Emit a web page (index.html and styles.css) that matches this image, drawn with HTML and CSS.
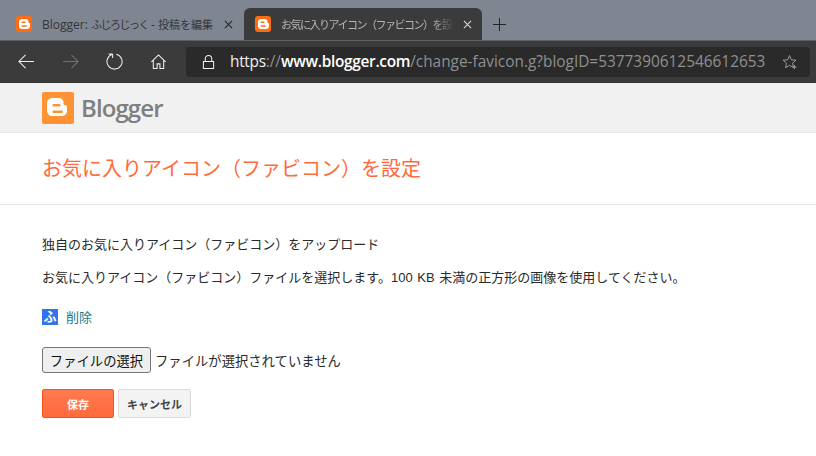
FILE: index.html
```html
<!DOCTYPE html>
<html lang="ja">
<head>
    <meta charset="UTF-8">
    <title>お気に入りアイコン（ファビコン）を設定</title>
    <link rel="stylesheet" href="styles.css">
</head>
<body>
    <!-- Browser chrome -->
    <div class="tabstrip">
        <div class="tab">
            <svg class="favicon" viewBox="0 0 16 16"><use href="#blogger-mark"/></svg>
            <span class="tab-title">Blogger: <span class="tab-ja">ふじろじっく</span> - <span class="tab-ja-wide">投稿を編集</span></span>
            <svg class="tab-close" viewBox="0 0 10 10"><path d="M1 1l8 8M9 1l-8 8"/></svg>
        </div>
        <div class="tab tab-active">
            <svg class="favicon" viewBox="0 0 16 16"><use href="#blogger-mark"/></svg>
            <span class="tab-title tab-fade"><span class="tab-ja">お気に入りアイコン（ファビコン）を設定</span></span>
            <svg class="tab-close" viewBox="0 0 10 10"><path d="M1 1l8 8M9 1l-8 8"/></svg>
        </div>
        <svg class="new-tab" viewBox="0 0 14 14"><path d="M7 0v14M0 7h14"/></svg>
    </div>

    <div class="toolbar">
        <svg class="nav-icon" viewBox="0 0 18 18"><path d="M17 9H1M8 2L1 9l7 7"/></svg>
        <svg class="nav-icon nav-disabled" viewBox="0 0 18 18"><path d="M1 9h16M10 2l7 7-7 7"/></svg>
        <svg class="nav-icon" viewBox="0 0 18 18"><path d="M11 1.300a8 8 0 1 1-4.300.1M7 1v4.300M7 1H2.800"/></svg>
        <svg class="nav-icon" viewBox="0 0 18 18"><path d="M1.500 9.500L9 2l7.500 7.500M3.500 7.500V16.500h4v-5h3v5h4V7.500"/></svg>
        <div class="addressbar">
            <svg class="lock" viewBox="0 0 14 16"><path d="M1.500 7.500h11v7.500h-11zM3.500 7.500V4.500a3.500 3.500 0 0 1 7 0v3"/></svg>
            <span class="url"><span class="url-scheme">https</span>://<span class="url-host">www.blogger.com</span>/change-favicon.g?blogID=5377390612546612653</span>
            <svg class="star" viewBox="0 0 16 16"><path d="M7.500 1.500l1.800 4.300 4.700.4-3.500 3 1 4.500-4-2.400-4 2.400 1-4.500-3.500-3 4.700-.4zM12.500 11v4M10.500 13h4"/></svg>
        </div>
    </div>

    <!-- Page -->
    <header class="brand-bar">
        <svg class="brand-logo" viewBox="0 0 32 32">
            <rect width="32" height="32" rx="2" fill="#ff9334"/>
            <path fill="#fff" d="M11 6h5.500c3 0 5 2 5 4.500V12c0 .8.700 1.200 1.700 1.200 1.300 0 1.800.500 1.800 1.500v4c0 3-2.300 5.300-5.300 5.300h-9.200c-3 0-5.500-2.300-5.500-5.300V11c0-3 2.500-5 6-5z"/>
            <rect x="10.500" y="12" width="8" height="2.400" rx="1.200" fill="#ff9334"/>
            <rect x="10.500" y="18.500" width="10.500" height="2.400" rx="1.200" fill="#ff9334"/>
        </svg>
        <span class="brand-name">Blogger</span>
    </header>

    <h1 class="page-title">お気に入りアイコン（ファビコン）を設定</h1>

    <main class="content">
        <p class="upload-title">独自のお気に入りアイコン（ファビコン）をアップロード</p>
        <p class="upload-hint">お気に入りアイコン（ファビコン）ファイルを選択します。100 KB 未満の正方形の画像を使用してください。</p>

        <div class="current-icon">
            <span class="icon-preview">ふ</span>
            <a class="delete-link" href="#">削除</a>
        </div>

        <div class="file-row">
            <button class="file-button" type="button">ファイルの選択</button>
            <span class="file-status">ファイルが選択されていません</span>
        </div>

        <div class="actions">
            <button class="btn btn-save" type="button">保存</button>
            <button class="btn btn-cancel" type="button">キャンセル</button>
        </div>
    </main>

    <svg class="sprites" width="0" height="0">
        <symbol id="blogger-mark" viewBox="0 0 16 16">
            <rect width="16" height="16" rx="3" fill="#ff6d10"/>
            <path fill="#fff" d="M6 3h3.500C11.500 3 12.500 4.300 12.500 6v.5c0 .6.500.8 1 .8.400 0 .500.300.500.700v2c0 1.900-1.300 3-3 3H6c-1.800 0-3-1.200-3-3V6c0-1.700 1.200-3 3-3z"/>
            <rect x="5.500" y="5.500" width="4" height="1.500" rx=".7" fill="#ff6d10"/>
            <rect x="5.500" y="9.300" width="5.500" height="1.500" rx=".7" fill="#ff6d10"/>
        </symbol>
    </svg>
</body>
</html>
```

FILE: styles.css
```css
/* General Styles */
body {
    margin: 0;
    background: #fff;
    color: #2a2a2a;
    font-family: "Liberation Sans", "Noto Sans CJK JP", sans-serif;
    font-size: 13px;
    overflow: hidden;
}

.sprites {
    position: absolute;
}

/* Tab strip */
.tabstrip {
    display: flex;
    align-items: flex-end;
    height: 40px;
    box-sizing: border-box;
    padding-top: 8px;
    background: #808691;
}

.tab {
    display: flex;
    align-items: center;
    width: 244px;
    height: 32px;
    box-sizing: border-box;
    padding: 0 11px 0 16px;
    color: #33353a;
    font-family: "Open Sans", "Noto Sans CJK JP", sans-serif;
    font-size: 12px;
}

.tab-active {
    width: 238px;
    padding: 0 10px 0 11px;
    border-radius: 6px 6px 0 0;
    background: #3b3b3b;
    color: #b5b5b5;
}

.favicon {
    flex: none;
    width: 16px;
    height: 16px;
    margin-right: 10px;
}

.tab-title {
    flex: 1;
    overflow: hidden;
    white-space: nowrap;
}

/* Narrow kana, the UI font of the original tabs sets them tighter */
.tab-ja {
    font-size: 11px;
    letter-spacing: -1.5px;
}

.tab-ja-wide {
    font-size: 11px;
}

.tab-fade {
    -webkit-mask-image: linear-gradient(to right, #000 88%, transparent);
    mask-image: linear-gradient(to right, #000 88%, transparent);
}

.tab-close {
    flex: none;
    width: 9px;
    height: 9px;
    margin-left: 9px;
    fill: none;
    stroke: #26282c;
    stroke-width: 1.2;
}

.tab-active .tab-close {
    stroke: #d8d8d8;
}

.new-tab {
    width: 13px;
    height: 13px;
    margin: 0 0 9px 11px;
    fill: none;
    stroke: #1c1c1c;
    stroke-width: 1;
}

/* Toolbar */
.toolbar {
    display: flex;
    align-items: center;
    gap: 27px;
    height: 43px;
    box-sizing: border-box;
    padding: 0 6px 0 18px;
    background: #3b3b3b;
    border-top: 1px solid #5d5f63;
    border-bottom: 1px solid #333;
}

.nav-icon {
    flex: none;
    width: 17px;
    height: 17px;
    fill: none;
    stroke: #f0f0f0;
    stroke-width: 1.1;
}

.nav-disabled {
    stroke: #717171;
}

.addressbar {
    display: flex;
    align-items: center;
    flex: 1;
    height: 30px;
    margin-left: -8px;
    padding: 0 12px 0 16px;
    border-radius: 4px;
    background: #2a2a2a;
    color: #8f8f8f;
    font-family: "Open Sans", sans-serif;
    font-size: 15.4px;
}

.lock {
    flex: none;
    width: 13px;
    height: 16px;
    margin-right: 15px;
    fill: none;
    stroke: #f0f0f0;
    stroke-width: 1.1;
}

.url {
    flex: 1;
    white-space: nowrap;
    overflow: hidden;
}

.url-scheme {
    color: #f0f0f0;
    letter-spacing: -0.3px;
}

.url-host {
    color: #fff;
    font-weight: 600;
    letter-spacing: -0.3px;
}

.star {
    flex: none;
    width: 16px;
    height: 16px;
    fill: none;
    stroke: #9a9a9a;
    stroke-width: 1;
}

/* Blogger header */
.brand-bar {
    display: flex;
    align-items: center;
    gap: 7px;
    height: 50px;
    box-sizing: border-box;
    padding-left: 42px;
    background: #f1f1f1;
    border-bottom: 1px solid #e5e5e5;
}

.brand-logo {
    width: 32px;
    height: 32px;
}

.brand-name {
    color: #7d7f80;
    font-family: "Open Sans", sans-serif;
    font-size: 24px;
    font-weight: 600;
    letter-spacing: -0.9px;
}

.page-title {
    margin: 0;
    height: 72px;
    box-sizing: border-box;
    padding: 23px 0 0 42px;
    border-bottom: 1px solid #e8e8e8;
    color: #ff6a3c;
    font-size: 20px;
    font-weight: 400;
    line-height: 26px;
}

/* Form */
.content {
    padding: 31px 42px 0;
}

.content p {
    margin: 0;
    line-height: 18px;
}

.upload-hint {
    padding-top: 15px;
    word-spacing: 1px;
}

.current-icon {
    display: flex;
    align-items: center;
    gap: 8px;
    margin-top: 20px;
    height: 18px;
}

.icon-preview {
    width: 16px;
    height: 16px;
    margin-top: 2px;
    background: #2f74e8;
    color: #fff;
    font-size: 13px;
    font-weight: 700;
    line-height: 16px;
    text-align: center;
}

.delete-link {
    color: #1a7a8a;
    font-size: 13px;
    text-decoration: none;
}

.file-row {
    display: flex;
    align-items: center;
    gap: 4px;
    margin-top: 22px;
    font-size: 13.33px;
}

.file-button {
    width: 109px;
    height: 26px;
    padding: 0;
    background: #efefef;
    border: 1px solid #767676;
    border-radius: 3px;
    color: #111;
    font: inherit;
}

.actions {
    display: flex;
    gap: 4px;
    margin-top: 16px;
}

.btn {
    height: 29px;
    padding: 0;
    border-radius: 2px;
    font: inherit;
    font-size: 11px;
    font-weight: 700;
}

.btn-save {
    width: 72px;
    background: linear-gradient(#ff7a50, #ff6a3c);
    border: 1px solid #f2521e;
    color: #fff;
}

.btn-cancel {
    width: 73px;
    background: #f3f3f3;
    border: 1px solid #dcdcdc;
    color: #444;
}
```
